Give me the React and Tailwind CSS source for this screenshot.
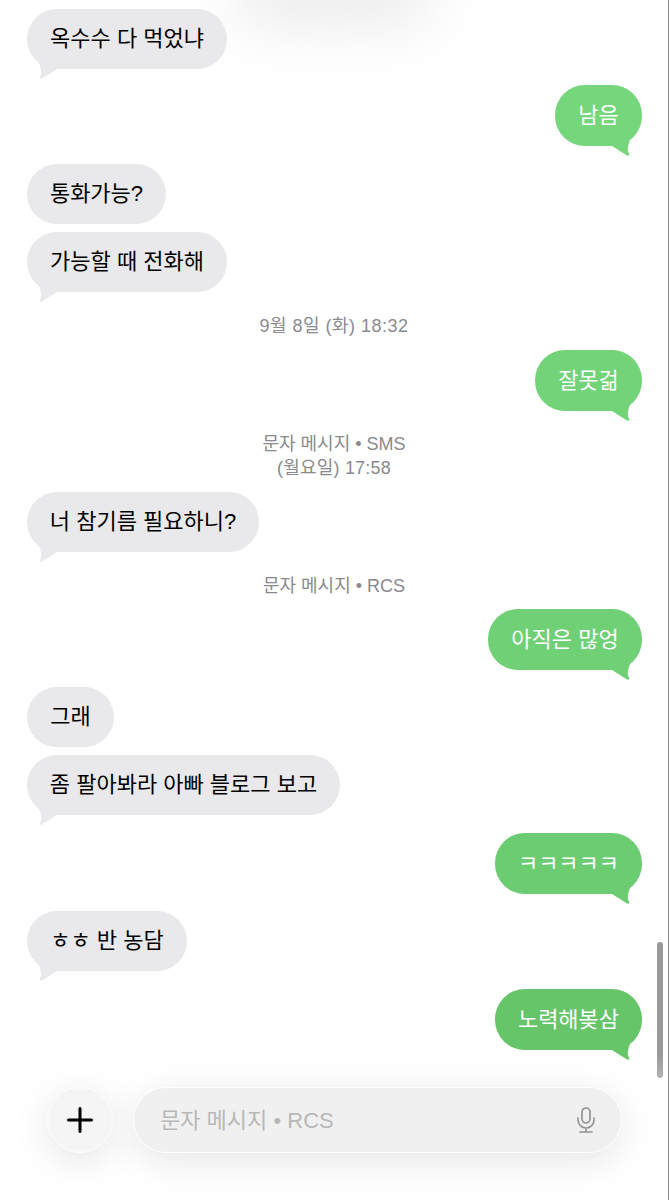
import React from 'react';

const font = 'font-["Liberation_Sans","Noto_Sans_CJK_KR",sans-serif]';

const TailLeft = () => (
  <svg className="absolute left-[12px] top-[47px]" width="28" height="24" viewBox="0 0 28 24">
    <path d="M18 13 L3 22.5 C1 23.5 0 22 1 20.5 C2.5 18 3 15 0 7 L18 0 Z" fill="#e9e9eb" />
  </svg>
);

const TailRight = ({ fill }) => (
  <svg className="absolute right-[12px] top-[48px]" width="28" height="24" viewBox="0 0 28 24">
    <path d="M10 13 L25 22.5 C27 23.5 28 22 27 20.5 C25.5 18 25 15 28 7 L10 0 Z" fill={fill} />
  </svg>
);

const Left = ({ children, tail, mt, w }) => (
  <div className={`flex justify-start pl-[27px] ${mt}`}>
    <div className={`relative h-[60px] flex items-center justify-center rounded-[30px] bg-[#e9e9eb] text-black text-[22px] whitespace-nowrap ${w}`}>
      {tail && <TailLeft />}
      <span className="relative pb-[1px]">{children}</span>
    </div>
  </div>
);

const Right = ({ children, bg, fill, mt, w }) => (
  <div className={`flex justify-end pr-[26px] ${mt}`}>
    <div className={`relative h-[61px] flex items-center justify-center rounded-[30px] text-white text-[22px] whitespace-nowrap ${bg} ${w}`}>
      <TailRight fill={fill} />
      <span className="relative pb-[1px]">{children}</span>
    </div>
  </div>
);

const Label = ({ children, mt }) => (
  <div className={`text-center text-[#8a8a8e] text-[18px] leading-[24px] ${mt}`}>{children}</div>
);

export default function App() {
  return (
    <div className={`relative h-[1200px] w-[669px] overflow-hidden bg-white border-r border-[#8c8c8c] ${font}`}>
      {/* 상단 그림자 */}
      <div className="absolute left-[233px] top-[-45px] w-[200px] h-[70px] rounded-full bg-[#ebebeb] blur-[30px]" />

      <div className="relative pt-[9px]">
        <Left tail w="w-[200px]">옥수수 다 먹었냐</Left>
        <Right bg="bg-[#75d67b]" fill="#75d67b" mt="mt-[16px]" w="w-[87px]">남음</Right>
        <Left mt="mt-[18px]" w="w-[139px]">통화가능?</Left>
        <Left tail mt="mt-[8px]" w="w-[200px]">가능할 때 전화해</Left>
        <Label mt="mt-[22px]"><span className="tracking-[0.5px]">9월 8일 (화) 18:32</span></Label>
        <Right bg="bg-[#72d379]" fill="#72d379" mt="mt-[12px]" w="w-[107px]">잘못걺</Right>
        <Label mt="mt-[21px]">문자 메시지 • SMS<br /><span className="tracking-[0.2px]">(월요일) 17:58</span></Label>
        <Left tail mt="mt-[12px]" w="w-[232px]">너 참기름 필요하니?</Left>
        <Label mt="mt-[22px]">문자 메시지 • RCS</Label>
        <Right bg="bg-[#6fd076]" fill="#6fd076" mt="mt-[11px]" w="w-[154px]">아직은 많엉</Right>
        <Left mt="mt-[17px]" w="w-[87px]">그래</Left>
        <Left tail mt="mt-[8px]" w="w-[313px]">좀 팔아봐라 아빠 블로그 보고</Left>
        <Right bg="bg-[#6bcc72]" fill="#6bcc72" mt="mt-[18px]" w="w-[147px]">ㅋㅋㅋㅋㅋ</Right>
        <Left tail mt="mt-[17px]" w="w-[160px]">ㅎㅎ 반 농담</Left>
        <Right bg="bg-[#66c569]" fill="#66c569" mt="mt-[18px]" w="w-[147px]">노력해봊삼</Right>
      </div>

      {/* 스크롤바 */}
      <div className="absolute right-[5px] top-[942px] w-[6px] h-[136px] rounded-full bg-[#9a9a9a]" />

      {/* 하단 입력창 */}
      <div className="absolute left-0 right-0 bottom-0 h-[145px] bg-gradient-to-b from-white/0 via-white/80 to-white" />
      <div className="absolute left-[47px] right-[46px] top-[1087px] flex gap-[20px]">
        <div className="w-[66px] h-[66px] flex items-center justify-center rounded-full bg-[#f5f5f5] border-[1.5px] border-white shadow-[0_8px_36px_rgba(0,0,0,0.1)]">
          <svg width="26" height="26" viewBox="0 0 26 26" stroke="#000" strokeWidth="3" strokeLinecap="round">
            <path d="M13 1.5v23M1.5 13h23" />
          </svg>
        </div>
        <div className="flex-1 h-[66px] flex items-center justify-between pl-[26px] pr-[25px] rounded-full bg-[#f0f0f0] border-[1.5px] border-white shadow-[0_8px_36px_rgba(0,0,0,0.1)]">
          <span className="text-[22px] text-[#b8b8b8]">문자 메시지 • RCS</span>
          <svg width="20" height="26" viewBox="0 0 20 26" fill="none" stroke="#939393" strokeWidth="1.7" strokeLinecap="round">
            <rect x="6" y="1" width="8" height="15" rx="4" />
            <path d="M2 11v2a8 8 0 0 0 16 0v-2M10 21v4M4 25h12" />
          </svg>
        </div>
      </div>
    </div>
  );
}
